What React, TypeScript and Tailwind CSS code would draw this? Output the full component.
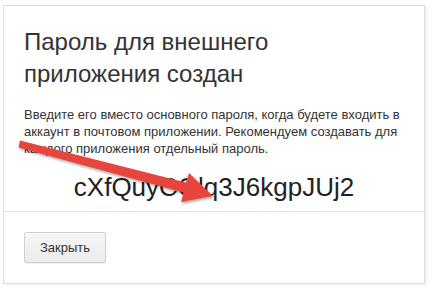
import React from 'react';

export default function App() {
  return (
    <div className="relative w-[443px] h-[295px] overflow-hidden bg-white pl-[3px] pt-[5px] font-['Liberation_Sans',Arial,sans-serif] text-[#333]">
      {/* Card */}
      <div className="w-[422px] border border-[#dedede] bg-white shadow-[2px_1px_3px_rgba(0,0,0,0.07)]">
        <div className="px-[20px] pt-[20px] pb-[9px]">
          <h1 className="text-[24px] leading-[32px] font-normal text-[#333]">
            Пароль для внешнего
            <br />
            приложения создан
          </h1>
          <p className="mt-[16px] text-[13px] leading-[17px] text-[#333]">
            Введите его вместо основного пароля, когда будете входить в аккаунт в почтовом приложении. Рекомендуем создавать для каждого приложения отдельный пароль.
          </p>
          <div className="mt-[15px] text-center text-[26px] leading-[30px] text-[#222]">
            cXfQuyCOlq3J6kgpJUj2
          </div>
        </div>
        <div className="border-t border-[#e3e3e3] p-[20px]">
          <button className="h-[31px] w-[82px] rounded-[2px] border border-[#d0d0d0] bg-gradient-to-b from-[#f7f7f7] to-[#ebebeb] text-[13px] text-[#333] shadow-[0_1px_1px_rgba(0,0,0,0.06)]">
            Закрыть
          </button>
        </div>
      </div>

      {/* Red annotation arrow */}
      <svg
        className="pointer-events-none absolute left-0 top-0 drop-shadow-[1px_2px_1px_rgba(0,0,0,0.3)]"
        width="443"
        height="295"
        viewBox="0 0 443 295"
      >
        <polygon
          points="20,140.5 186,182.5 189,173 213,196 181,202 183.5,192.5 18.5,147.5"
          fill="#e8463c"
        />
      </svg>
    </div>
  );
}
